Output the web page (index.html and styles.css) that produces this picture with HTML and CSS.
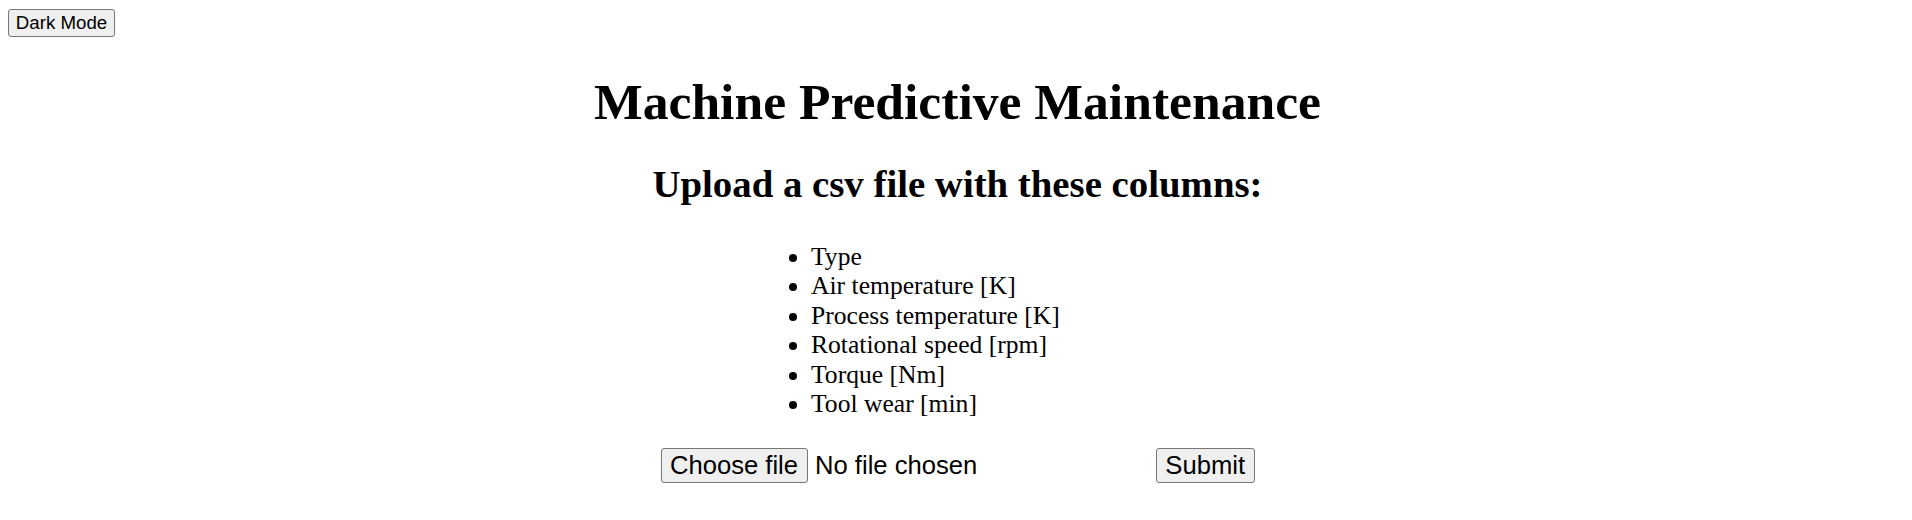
FILE: index.html
```html
<!DOCTYPE html>
<html>
<head>
<meta charset="utf-8">
<title>Machine Predictive Maintenance</title>
<link rel="stylesheet" href="styles.css">
</head>
<body>
<button class="btn mode-btn" type="button">Dark Mode</button>
<main class="content">
  <h1 class="title">Machine Predictive Maintenance</h1>
  <h2 class="subtitle">Upload a csv file with these columns:</h2>
  <div class="cols-wrap">
    <ul class="cols">
      <li>Type</li>
      <li>Air temperature [K]</li>
      <li>Process temperature [K]</li>
      <li>Rotational speed [rpm]</li>
      <li>Torque [Nm]</li>
      <li>Tool wear [min]</li>
    </ul>
  </div>
  <form class="upload">
    <div class="file">
      <span class="btn big-btn">Choose file</span>
      <span class="file-label">No file chosen</span>
    </div>
    <span class="btn big-btn">Submit</span>
  </form>
</main>
</body>
</html>
```

FILE: styles.css
```css
html, body {
  margin: 0;
  padding: 0;
  background: #ffffff;
  color: #000000;
}
body {
  font-family: "Liberation Serif", "Times New Roman", serif;
  padding: 9px 8px 0 8px;
}
.btn {
  display: inline-flex;
  align-items: center;
  justify-content: center;
  box-sizing: border-box;
  font-family: "Liberation Sans", Arial, sans-serif;
  color: #000;
  background: #efefef;
  border: 1px solid #767676;
  border-radius: 3px;
  line-height: 1;
}
.mode-btn {
  font-size: 18.7px;
  height: 28px;
  width: 107px;
  padding: 0;
}
.content {
  display: flex;
  flex-direction: column;
  align-items: center;
  padding-left: 3px;
}
.title {
  font-size: 51.6px;
  font-weight: bold;
  margin: 35px 0 0 0;
  line-height: 1.15;
}
.subtitle {
  font-size: 38.8px;
  font-weight: bold;
  margin: 31px 0 0 0;
  line-height: 1.15;
}
.cols-wrap {
  width: 594px;
  margin-top: 35px;
}
.cols {
  margin: 0;
  padding-left: 150.5px;
  font-size: 25.6px;
  line-height: 1.15;
}
.upload {
  width: 594px;
  margin-top: 29.5px;
  display: flex;
  justify-content: space-between;
  align-items: center;
}
.file {
  display: flex;
  align-items: center;
  gap: 7.5px;
}
.big-btn {
  font-size: 25.6px;
  height: 35px;
  padding: 0 8.5px;
}
.file-label {
  font-family: "Liberation Sans", Arial, sans-serif;
  font-size: 25.6px;
}
```
